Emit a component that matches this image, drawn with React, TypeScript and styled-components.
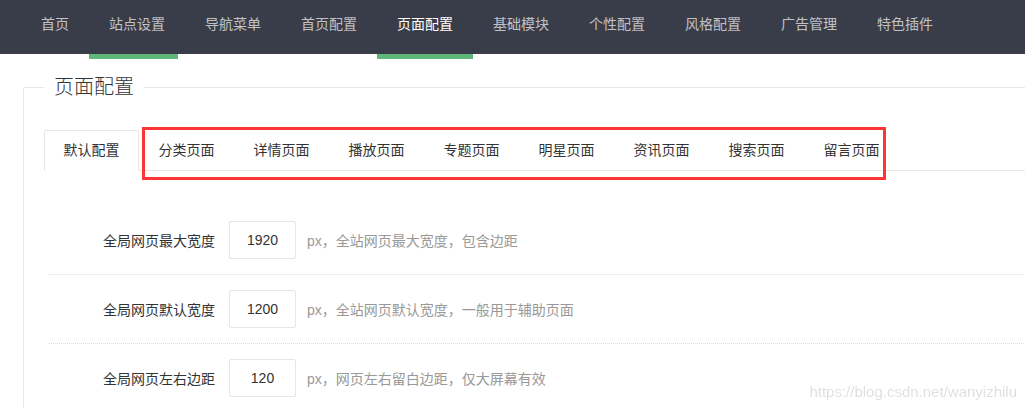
import React from 'react';
import styled, { createGlobalStyle } from 'styled-components';

const GlobalStyle = createGlobalStyle`
  html, body {
    margin: 0;
    padding: 0;
    background: #fff;
    overflow: hidden;
  }
  body {
    font-family: "Liberation Sans", "Noto Sans CJK SC", sans-serif;
    font-size: 14px;
    color: #333;
  }
  * {
    box-sizing: border-box;
  }
`;

const NavBar = styled.ul`
  display: flex;
  margin: 0;
  padding: 0 0 0 21px;
  height: 54px;
  background: #393d49;
  list-style: none;
`;

const NavItem = styled.li<{ $active?: boolean; $bar?: number }>`
  position: relative;
  padding: 0 20px;
  line-height: 49px;
  font-size: 14px;
  color: ${(p) => (p.$active ? '#fff' : 'rgba(255, 255, 255, 0.7)')};
  white-space: nowrap;

  &::after {
    content: '';
    display: ${(p) => (p.$bar ? 'block' : 'none')};
    position: absolute;
    left: 0;
    bottom: -5px;
    height: 5px;
    width: ${(p) => p.$bar || 0}px;
    background: #5fb878;
  }
`;

const Page = styled.div`
  padding: 19px 0 0 23px;
  overflow: hidden;
`;

const Field = styled.fieldset`
  margin: 0 -20px 0 0;
  padding: 0 0 0 20px;
  border: 1px solid #e6e6e6;
  border-radius: 2px;
`;

const Legend = styled.legend`
  margin-left: 0;
  padding: 0 10px;
  font-size: 20px;
  line-height: 28px;
  font-weight: 300;
  color: #333;
`;

const TabTitle = styled.ul`
  position: relative;
  display: flex;
  margin: 29px 0 0;
  padding: 0;
  height: 41px;
  list-style: none;
  border-bottom: 1px solid #e6e6e6;
`;

const Tab = styled.li<{ $active?: boolean }>`
  width: 95px;
  height: ${(p) => (p.$active ? '41px' : '40px')};
  line-height: 38px;
  text-align: center;
  color: #333;
  white-space: nowrap;
  background: #fff;
  border: 1px solid ${(p) => (p.$active ? '#e6e6e6' : 'transparent')};
  border-bottom-color: ${(p) => (p.$active ? '#fff' : 'transparent')};
  border-radius: 2px 2px 0 0;
`;

const Highlight = styled.div`
  position: absolute;
  left: 98px;
  top: -3px;
  width: 744px;
  height: 53px;
  border: 3px solid #fc3636;
  pointer-events: none;
`;

const Form = styled.div`
  padding: 35px 0 0 5px;
`;

const Row = styled.div`
  display: flex;
  align-items: center;
  padding: 15px 0;
  border-bottom: 1px dotted #dcdcdc;
`;

const Label = styled.label`
  width: 166px;
  padding-right: 14px;
  text-align: right;
  color: #333;
  white-space: nowrap;
  box-sizing: content-box;
`;

const Input = styled.input`
  width: 67px;
  height: 38px;
  padding: 0;
  border: 1px solid #e6e6e6;
  border-radius: 2px;
  font-family: "Liberation Sans", "Noto Sans CJK SC", sans-serif;
  font-size: 14px;
  color: #333;
  text-align: center;
  outline: none;
`;

const Hint = styled.span`
  margin-left: 11px;
  color: #999;
  white-space: nowrap;
`;

const Watermark = styled.div`
  position: fixed;
  right: 8px;
  bottom: 8px;
  font-family: "Liberation Sans", sans-serif;
  font-size: 15px;
  color: rgba(0, 0, 0, 0.13);
  pointer-events: none;
`;

const navItems = [
  { name: '首页' },
  { name: '站点设置', bar: 89 },
  { name: '导航菜单' },
  { name: '首页配置' },
  { name: '页面配置', active: true, bar: 96 },
  { name: '基础模块' },
  { name: '个性配置' },
  { name: '风格配置' },
  { name: '广告管理' },
  { name: '特色插件' },
];

const tabs = ['默认配置', '分类页面', '详情页面', '播放页面', '专题页面', '明星页面', '资讯页面', '搜索页面', '留言页面'];

const rows = [
  { label: '全局网页最大宽度', value: '1920', hint: 'px，全站网页最大宽度，包含边距' },
  { label: '全局网页默认宽度', value: '1200', hint: 'px，全站网页默认宽度，一般用于辅助页面' },
  { label: '全局网页左右边距', value: '120', hint: 'px，网页左右留白边距，仅大屏幕有效' },
];

const App: React.FC = () => {
  return (
    <>
      <GlobalStyle />
      <NavBar>
        {navItems.map((item) => (
          <NavItem key={item.name} $active={item.active} $bar={item.bar}>
            {item.name}
          </NavItem>
        ))}
      </NavBar>
      <Page>
        <Field>
          <Legend>页面配置</Legend>
          <TabTitle>
            {tabs.map((t, i) => (
              <Tab key={t} $active={i === 0}>
                {t}
              </Tab>
            ))}
            <Highlight />
          </TabTitle>
          <Form>
            {rows.map((r) => (
              <Row key={r.label}>
                <Label>{r.label}</Label>
                <Input defaultValue={r.value} />
                <Hint>{r.hint}</Hint>
              </Row>
            ))}
          </Form>
        </Field>
      </Page>
      <Watermark>https://blog.csdn.net/wanyizhilu</Watermark>
    </>
  );
};

export default App;
